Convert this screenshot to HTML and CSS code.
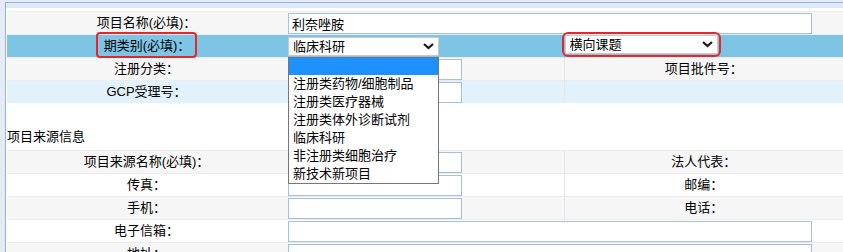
FILE: index.html
```html
<!DOCTYPE html>
<html>
<head>
<meta charset="utf-8">
<link rel="stylesheet" href="styles.css">
</head>
<body>
<div class="frame">
  <div class="frame-bar"></div>
  <div class="content">
    <table class="form-table">
      <colgroup><col class="c1"><col class="c2"><col class="c3"><col class="c4"></colgroup>
      <tr class="row-grey">
        <td class="label">项目名称(必填)：</td>
        <td colspan="3"><input class="wide" value="利奈唑胺"></td>
      </tr>
      <tr class="row-active">
        <td class="label"><span class="mark">期类别(必填)：</span></td>
        <td>
          <span class="select-box sel-a">
            <select class="sel"><option>临床科研</option></select>
            <svg class="chevron" width="11" height="7" viewBox="0 0 11 7"><polyline points="1,1 5.5,5 10,1" fill="none" stroke="#1a1a1a" stroke-width="2.2"/></svg>
            <div class="options">
              <div class="opt opt-on">&nbsp;</div>
              <div class="opt">注册类药物/细胞制品</div>
              <div class="opt">注册类医疗器械</div>
              <div class="opt">注册类体外诊断试剂</div>
              <div class="opt">临床科研</div>
              <div class="opt">非注册类细胞治疗</div>
              <div class="opt">新技术新项目</div>
            </div>
          </span>
        </td>
        <td class="sep">
          <span class="select-box sel-b marked">
            <select class="sel"><option>横向课题</option></select>
            <svg class="chevron" width="11" height="7" viewBox="0 0 11 7"><polyline points="1,1 5.5,5 10,1" fill="none" stroke="#1a1a1a" stroke-width="2.2"/></svg>
          </span>
        </td>
        <td></td>
      </tr>
      <tr class="row-grey">
        <td class="label">注册分类：</td>
        <td><input class="short"></td>
        <td class="label sep">项目批件号：</td>
        <td></td>
      </tr>
      <tr class="row-blue">
        <td class="label">GCP受理号：</td>
        <td><input class="short"></td>
        <td class="sep"></td>
        <td></td>
      </tr>
    </table>

    <div class="section-title">项目来源信息</div>

    <table class="form-table">
      <colgroup><col class="c1"><col class="c2"><col class="c3"><col class="c4"></colgroup>
      <tr class="row-grey">
        <td class="label">项目来源名称(必填)：</td>
        <td><input class="short"></td>
        <td class="label sep">法人代表：</td>
        <td></td>
      </tr>
      <tr>
        <td class="label">传真：</td>
        <td><input class="short"></td>
        <td class="label sep">邮编：</td>
        <td></td>
      </tr>
      <tr class="row-grey">
        <td class="label">手机：</td>
        <td><input class="short"></td>
        <td class="label sep">电话：</td>
        <td></td>
      </tr>
      <tr>
        <td class="label">电子信箱：</td>
        <td colspan="3"><input class="wide"></td>
      </tr>
      <tr class="row-grey">
        <td class="label">地址：</td>
        <td colspan="3"><input class="wide"></td>
      </tr>
    </table>
  </div>
</div>
</body>
</html>
```

FILE: styles.css
```css
html, body {
    margin: 0;
    overflow: hidden;
}
body {
    background: #e4ebf6;
    font-family: "Liberation Sans", "Noto Sans CJK SC", sans-serif;
    font-size: 13px;
    color: #000;
}
.frame {
    margin: 2px 0 0 5px;
    border-top: 1px solid #93b3e3;
    border-left: 1px solid #93b3e3;
    background: #fff;
    height: 260px;
}
.frame-bar {
    height: 5px;
    background: #dfe8f5;
}
.content {
    padding: 3px 0 0 1px;
}
.form-table {
    border-collapse: collapse;
    table-layout: fixed;
    width: 1116px;
    font-size: 13px;
}
.c1 { width: 279px; }
.c2 { width: 278px; }
.c3 { width: 279px; }
.c4 { width: 280px; }
.form-table td {
    height: 22px;
    padding: 0 0 0 2px;
    border-top: 1px solid #ececec;
    line-height: 16px;
    vertical-align: middle;
    white-space: nowrap;
}
.form-table td.label {
    text-align: center;
    padding: 0;
}
.form-table td.sep {
    border-left: 1px solid #e6e6e6;
    padding-left: 0;
}
.row-grey td { background: #f6f6f6; }
.row-blue td { background: #e2f2fc; }
.row-active td { background: #7ec4e4; }
.row-active td.sep { border-left-color: #7ec4e4; }

input {
    box-sizing: border-box;
    height: 21px;
    border: 1px solid #a3bfe3;
    padding: 0 3px;
    font: inherit;
    vertical-align: middle;
    background: #fff;
    outline: none;
}
input.short { width: 174px; }
input.wide { width: 524px; }

.select-box {
    position: relative;
    display: inline-block;
    vertical-align: middle;
    height: 19px;
}
.sel {
    appearance: none;
    -webkit-appearance: none;
    box-sizing: border-box;
    width: 100%;
    height: 19px;
    border: 1px solid #c6cad0;
    border-radius: 0;
    background: #fff;
    font: inherit;
    line-height: 17px;
    padding: 0 0 0 4px;
    color: #000;
    display: block;
}
.chevron {
    position: absolute;
    right: 5px;
    top: 6px;
}
.sel-a { width: 151px; }
.sel-b { width: 153px; margin-top: -3px; }

.mark {
    border: 2px solid #e8262a;
    border-radius: 4px;
    padding: 4px 5px 3px 6px;
}
.marked {
    outline: 2px solid #e8262a;
    outline-offset: 1px;
    border-radius: 3px;
}

.options {
    position: absolute;
    left: 0;
    top: 20px;
    width: 151px;
    box-sizing: border-box;
    border: 1px solid #767676;
    background: #fff;
    z-index: 5;
}
.opt {
    height: 18px;
    line-height: 18px;
    padding-left: 4px;
    background: #fff;
}
.opt-on {
    height: 17px;
    background: #1e90ff;
}

.section-title {
    margin-top: 21px;
    height: 26px;
    line-height: 26px;
}
```
